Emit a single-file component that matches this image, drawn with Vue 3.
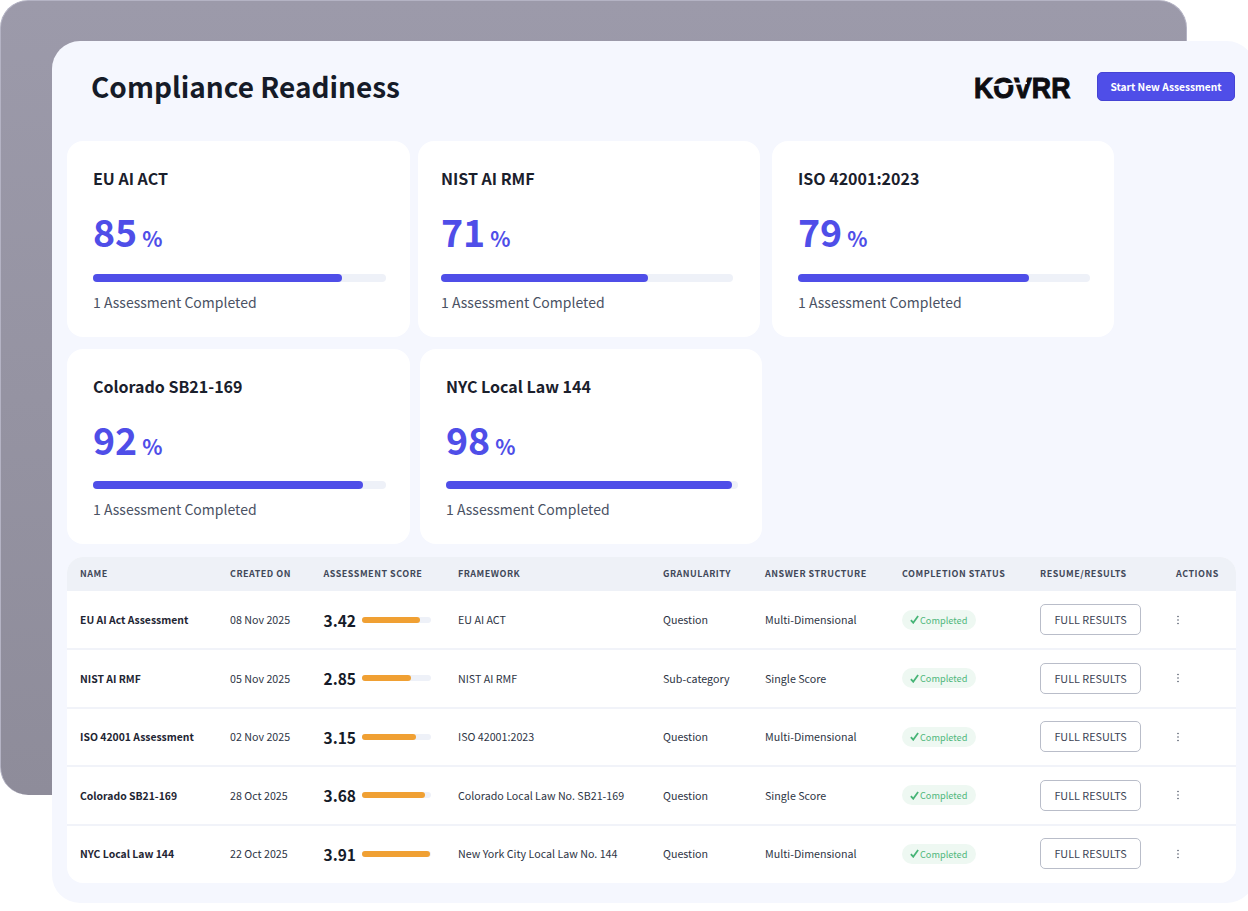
<script setup>
const cards = [
  { title: 'EU AI ACT', value: 85 },
  { title: 'NIST AI RMF', value: 71 },
  { title: 'ISO 42001:2023', value: 79 },
  { title: 'Colorado SB21-169', value: 92 },
  { title: 'NYC Local Law 144', value: 98 }
]
const columns = ['Name', 'Created on', 'Assessment score', 'Framework', 'Granularity', 'Answer structure', 'Completion status', 'Resume/Results', 'Actions']
const rows = [
  { name: 'EU AI Act Assessment', date: '08 Nov 2025', score: '3.42', pct: 84, framework: 'EU AI ACT', granularity: 'Question', structure: 'Multi-Dimensional' },
  { name: 'NIST AI RMF', date: '05 Nov 2025', score: '2.85', pct: 71, framework: 'NIST AI RMF', granularity: 'Sub-category', structure: 'Single Score' },
  { name: 'ISO 42001 Assessment', date: '02 Nov 2025', score: '3.15', pct: 79, framework: 'ISO 42001:2023', granularity: 'Question', structure: 'Multi-Dimensional' },
  { name: 'Colorado SB21-169', date: '28 Oct 2025', score: '3.68', pct: 92, framework: 'Colorado Local Law No. SB21-169', granularity: 'Question', structure: 'Single Score' },
  { name: 'NYC Local Law 144', date: '22 Oct 2025', score: '3.91', pct: 98, framework: 'New York City Local Law No. 144', granularity: 'Question', structure: 'Multi-Dimensional' }
]
</script>

<template>
  <div class="stage">
    <div class="backdrop"></div>
    <main class="panel">
      <header class="top">
        <h1>Compliance Readiness</h1>
        <div class="top-right">
          <div class="logo"><span>KOVRR</span></div>
          <button class="primary">Start New Assessment</button>
        </div>
      </header>
      <section class="cards">
        <article v-for="c in cards" :key="c.title" class="card">
          <h2>{{ c.title }}</h2>
          <div class="metric"><b>{{ c.value }}</b><span>%</span></div>
          <div class="track"><div class="fill" :style="{ width: c.value + '%' }"></div></div>
          <p>1 Assessment Completed</p>
        </article>
      </section>
      <section class="table">
        <div class="row head">
          <div v-for="col in columns" :key="col">{{ col }}</div>
        </div>
        <div v-for="r in rows" :key="r.name" class="row body">
          <div class="name">{{ r.name }}</div>
          <div>{{ r.date }}</div>
          <div class="score">
            <b>{{ r.score }}</b>
            <div class="mini"><div class="mini-fill" :style="{ width: r.pct + '%' }"></div></div>
          </div>
          <div>{{ r.framework }}</div>
          <div>{{ r.granularity }}</div>
          <div>{{ r.structure }}</div>
          <div><span class="badge"><svg viewBox="0 0 10 10" width="9" height="9"><path d="M1 5.6 3.6 8.6 9 1.2" fill="none" stroke="#46b476" stroke-width="2"/></svg>Completed</span></div>
          <div><button class="outline">FULL RESULTS</button></div>
          <div><svg class="dots" viewBox="0 0 4 10" width="4" height="10"><circle cx="2" cy="1.5" r=".8"/><circle cx="2" cy="5" r=".8"/><circle cx="2" cy="8.5" r=".8"/></svg></div>
        </div>
      </section>
    </main>
  </div>
</template>

<style>
html, body { margin: 0; background: #fff; }
</style>

<style scoped>
.stage {
  position: relative;
  width: 1248px;
  height: 911px;
  overflow: hidden;
  padding: 41px 0 0 52px;
  box-sizing: border-box;
  font-family: "Noto Sans CJK SC", "Noto Sans", sans-serif;
  color: #1a202c;
}
.backdrop {
  position: absolute;
  left: 0;
  top: 0;
  width: 1187px;
  height: 795px;
  box-sizing: border-box;
  border-radius: 28px;
  border: 1px solid #b4b3c4;
  border-width: 1px 1px 0 1px;
  background: linear-gradient(180deg, #9c9aaa, #8e8c9a);
}
.panel {
  position: relative;
  width: 1203px;
  height: 862px;
  box-sizing: border-box;
  background: #f5f7fe;
  border-radius: 28px;
  padding: 0 0 0 15px;
}
.top {
  display: flex;
  align-items: center;
  justify-content: space-between;
  height: 100px;
  padding: 0 20px 0 24px;
}
h1 {
  margin: -10px 0 0;
  font-size: 28px;
  font-weight: 700;
  color: #151b28;
}
.top-right { display: flex; align-items: center; gap: 26px; margin-top: -10px; }
.logo {
  position: relative;
  width: 97px;
  height: 24px;
  margin-top: 4px;
  font-family: "Liberation Sans", sans-serif;
  font-weight: 700;
  font-size: 30px;
  line-height: 24px;
  color: #0d0d12;
}
.logo span {
  display: block;
  transform: scaleX(.89);
  transform-origin: left center;
  white-space: nowrap;
  -webkit-text-stroke: 1px #0d0d12;
}
.logo::after {
  content: "";
  position: absolute;
  left: 19px;
  top: 7px;
  width: 34px;
  height: 2px;
  background: #f5f7fe;
  transform: rotate(-3deg);
}
.primary {
  width: 138px;
  height: 29px;
  border: 1px solid #4543d4;
  border-radius: 5px;
  background: #4f4ee8;
  color: #fff;
  font: 600 10.2px "Noto Sans CJK SC", sans-serif;
  padding: 0;
}
.cards {
  display: flex;
  flex-wrap: wrap;
  row-gap: 12px;
  width: 1047px;
}
.card {
  width: 343px;
  height: 196px;
  box-sizing: border-box;
  background: #fff;
  border-radius: 16px;
  padding: 24px 24px 0 26px;
}
.card:nth-child(2) { margin-left: 8px; width: 342px; padding-left: 23px; padding-right: 27px; }
.card:nth-child(3) { margin-left: 12px; width: 342px; }
.card:nth-child(4) { height: 195px; }
.card:nth-child(5) { margin-left: 10px; width: 342px; height: 195px; }
h2 {
  margin: 0;
  font-size: 16px;
  line-height: 26px;
  font-weight: 600;
  color: #1a202c;
}
.metric {
  margin-top: 13px;
  height: 54px;
  display: flex;
  align-items: baseline;
  gap: 5px;
  color: #4f4ee8;
}
.metric b { font-size: 37.5px; line-height: 54px; font-weight: 700; }
.metric span { font-size: 21px; font-weight: 600; }
.track { margin-top: 15px; height: 8px; border-radius: 4px; background: #eef1f8; }
.card:nth-child(-n+3) .track { margin-top: 16px; }
.fill { height: 100%; border-radius: 4px; background: #4f4ee8; }
.card p {
  margin: 9px 0 0;
  font-size: 14px;
  line-height: 22px;
  color: #4a5264;
}
.table {
  margin-top: 13px;
  width: 1169px;
  background: #fff;
  border-radius: 16px;
  overflow: hidden;
  font-size: 10.7px;
}
.row {
  display: grid;
  grid-template-columns: 150px 93.5px 134.5px 205px 102px 137px 138px 136px 1fr;
  align-items: center;
  padding-left: 13px;
  color: #2d3444;
}
.head {
  height: 33.5px;
  background: #eef1f7;
  font-size: 9px;
  font-weight: 700;
  letter-spacing: 0.5px;
  text-transform: uppercase;
  color: #414859;
}
.body { height: 58.5px; box-shadow: 0 1px 0 #f1f3f9, inset 0 -1px 0 #f1f3f9; }
.body:last-child { box-shadow: none; }
.name { font-weight: 700; font-size: 10.4px; color: #1e2533; }
.score { display: flex; align-items: center; gap: 6px; }
.score b { font-size: 15.5px; font-weight: 700; color: #151b28; }
.mini { width: 69px; height: 6px; border-radius: 3px; background: #eef1f8; }
.mini-fill { height: 100%; border-radius: 3px; background: #f0a033; }
.badge {
  display: inline-flex;
  align-items: center;
  gap: 1px;
  height: 20px;
  width: 74px;
  box-sizing: border-box;
  padding-left: 8px;
  border-radius: 10px;
  background: #eef8f2;
  color: #4fb77c;
  font-size: 9.2px;
}
.outline {
  display: block;
  width: 101px;
  height: 31px;
  border: 1.5px solid #b9bdc9;
  border-radius: 5px;
  background: #fff;
  color: #3d4455;
  font: 400 10.8px "Noto Sans CJK SC", sans-serif;
  padding: 0 0 1px;
}
.dots { display: block; fill: #555c6b; }
</style>
